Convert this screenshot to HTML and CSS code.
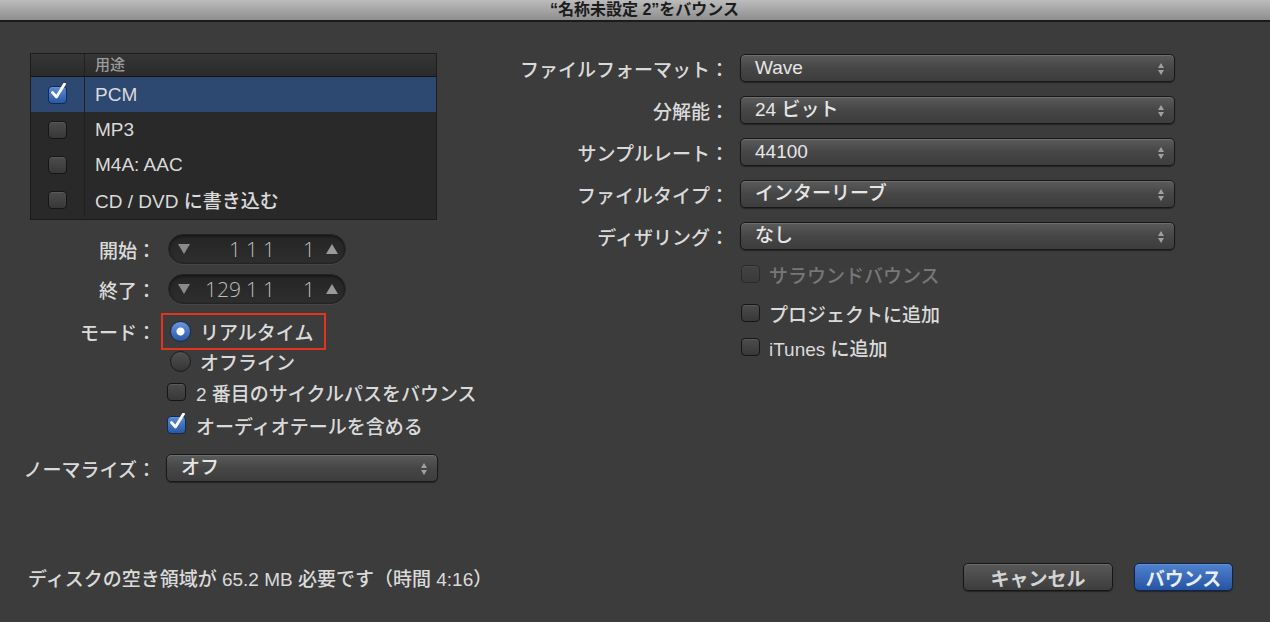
FILE: index.html
```html
<!DOCTYPE html>
<html lang="ja">

<head>
    <meta charset="UTF-8">
    <meta name="viewport" content="width=device-width, initial-scale=1.0">
    <title>“名称未設定 2”をバウンス</title>
    <link rel="stylesheet" href="styles.css">
</head>

<body>
    <div class="titlebar">“名称未設定 2”をバウンス</div>

    <div class="content">
        <div class="left-pane">
            <div class="format-list">
                <div class="list-header">
                    <div class="list-check"></div>
                    <div class="list-name">用途</div>
                </div>
                <div class="list-row selected">
                    <div class="list-check"><span class="checkbox checked"></span></div>
                    <div class="list-name">PCM</div>
                </div>
                <div class="list-row">
                    <div class="list-check"><span class="checkbox"></span></div>
                    <div class="list-name">MP3</div>
                </div>
                <div class="list-row">
                    <div class="list-check"><span class="checkbox"></span></div>
                    <div class="list-name">M4A: AAC</div>
                </div>
                <div class="list-row">
                    <div class="list-check"><span class="checkbox"></span></div>
                    <div class="list-name">CD / DVD に書き込む</div>
                </div>
            </div>

            <div class="form-row row-start">
                <div class="form-label">開始：</div>
                <div class="stepper">
                    <span class="tri-down"></span>
                    <span class="pos pos-bar">1</span>
                    <span class="pos pos-beat">1</span>
                    <span class="pos pos-div">1</span>
                    <span class="pos pos-tick">1</span>
                    <span class="tri-up"></span>
                </div>
            </div>

            <div class="form-row row-end">
                <div class="form-label">終了：</div>
                <div class="stepper">
                    <span class="tri-down"></span>
                    <span class="pos pos-bar">129</span>
                    <span class="pos pos-beat">1</span>
                    <span class="pos pos-div">1</span>
                    <span class="pos pos-tick">1</span>
                    <span class="tri-up"></span>
                </div>
            </div>

            <div class="form-row row-mode">
                <div class="form-label">モード：</div>
                <div class="highlight">
                    <span class="radio on"></span>
                    <span class="option-text">リアルタイム</span>
                </div>
            </div>

            <div class="form-row row-offline">
                <div class="form-label"></div>
                <span class="radio"></span>
                <span class="option-text">オフライン</span>
            </div>

            <div class="form-row row-check">
                <div class="form-label"></div>
                <span class="checkbox"></span>
                <span class="option-text">2 番目のサイクルパスをバウンス</span>
            </div>

            <div class="form-row row-check">
                <div class="form-label"></div>
                <span class="checkbox checked"></span>
                <span class="option-text">オーディオテールを含める</span>
            </div>

            <div class="form-row row-normalize">
                <div class="form-label">ノーマライズ：</div>
                <div class="select select-small">オフ<span class="arrows"></span></div>
            </div>
        </div>

        <div class="right-pane">
            <div class="field">
                <div class="field-label">ファイルフォーマット：</div>
                <div class="select">Wave<span class="arrows"></span></div>
            </div>
            <div class="field">
                <div class="field-label">分解能：</div>
                <div class="select">24 ビット<span class="arrows"></span></div>
            </div>
            <div class="field">
                <div class="field-label">サンプルレート：</div>
                <div class="select">44100<span class="arrows"></span></div>
            </div>
            <div class="field">
                <div class="field-label">ファイルタイプ：</div>
                <div class="select">インターリーブ<span class="arrows"></span></div>
            </div>
            <div class="field">
                <div class="field-label">ディザリング：</div>
                <div class="select">なし<span class="arrows"></span></div>
            </div>

            <div class="option disabled opt-surround">
                <span class="checkbox"></span>
                <span class="option-text">サラウンドバウンス</span>
            </div>
            <div class="option opt-project">
                <span class="checkbox"></span>
                <span class="option-text">プロジェクトに追加</span>
            </div>
            <div class="option opt-itunes">
                <span class="checkbox"></span>
                <span class="option-text">iTunes に追加</span>
            </div>
        </div>
    </div>

    <div class="footer">
        <div class="disk-info">ディスクの空き領域が 65.2 MB 必要です（時間 4:16）</div>
        <button type="button" class="btn">キャンセル</button>
        <button type="button" class="btn btn-primary">バウンス</button>
    </div>
</body>
</html>
```

FILE: styles.css
```css
body {
    font-family: "Liberation Sans", "Noto Sans CJK JP", sans-serif;
    background-color: #3c3c3c;
    color: #dadada;
    font-size: 19px;
    font-weight: 500;
    margin: 0;
    height: 100vh;
    display: flex;
    flex-direction: column;
    overflow: hidden;
}

/* window title */
.titlebar {
    height: 20px;
    line-height: 20px;
    text-align: center;
    padding-left: 19px;
    font-size: 16px;
    font-weight: bold;
    color: #1c1c1c;
    background: linear-gradient(#bcbcbc, #8e8e8e);
    border-bottom: 2px solid #1b1b1b;
}

.content {
    display: flex;
    padding-top: 31px;
}

/* left side */
.left-pane {
    width: 414px;
    padding-left: 24px;
}

.format-list {
    margin-left: 6px;
    width: 405px;
    height: 165px;
    background-color: #292929;
    border: 1px solid #1c1c1c;
}

.list-header {
    display: flex;
    height: 22px;
    background: linear-gradient(#363636, #2b2b2b);
    border-bottom: 1px solid #141414;
    font-size: 15px;
    color: #9c9c9c;
    line-height: 22px;
}

.list-row {
    display: flex;
    align-items: center;
    height: 35px;
}

.list-row.selected {
    background-color: #2d4971;
}

.list-check {
    width: 53px;
    height: 100%;
    border-right: 1px solid #202020;
    display: flex;
    align-items: center;
    justify-content: center;
}

.list-name {
    padding-left: 10px;
}

.form-row {
    display: flex;
    align-items: center;
    white-space: nowrap;
}

.form-label {
    width: 132px;
    margin-right: 10px;
    display: flex;
    justify-content: flex-end;
    flex-shrink: 0;
}

.row-start {
    margin-top: 14px;
    height: 30px;
}

.row-end {
    margin-top: 10px;
    height: 30px;
}

.row-mode {
    margin-top: 9px;
    height: 37px;
}

.row-offline {
    margin-top: 0;
    height: 22px;
}

.row-offline .radio {
    margin-left: 4px;
}

.row-check .checkbox {
    margin-left: 1px;
}

.row-check .option-text {
    margin-left: 10px;
}

.row-check {
    height: 26px;
    margin-top: 7px;
}

.row-normalize {
    margin-top: 16px;
    height: 28px;
}

.highlight {
    display: flex;
    align-items: center;
    box-sizing: border-box;
    height: 37px;
    width: 165px;
    margin-left: -5px;
    padding-left: 7px;
    border: 2px solid #e5341d;
}

.option-text {
    margin-left: 9px;
}

/* position stepper */
.stepper {
    position: relative;
    box-sizing: border-box;
    width: 178px;
    height: 30px;
    margin-left: 2px;
    border-radius: 15px;
    background: linear-gradient(#252525, #2e2e2e);
    border: 1px solid #232323;
    box-shadow: inset 0 1px 3px rgba(0, 0, 0, 0.6), 0 1px 0 rgba(255, 255, 255, 0.06);
    display: flex;
    align-items: center;
    color: #bdbdbd;
    font-size: 21px;
    font-family: "Open Sans", "Liberation Sans", sans-serif;
    font-weight: 300;
}

.tri-down,
.tri-up {
    width: 0;
    height: 0;
    border-left: 6px solid transparent;
    border-right: 6px solid transparent;
}

.tri-down {
    margin-left: 9px;
    border-top: 10px solid #8a8a8a;
}

.tri-up {
    margin-left: 11px;
    border-bottom: 10px solid #9a9a9a;
}

.pos {
    display: inline-block;
    text-align: right;
    line-height: 1;
}

.pos-bar {
    width: 51px;
}

.pos-beat {
    width: 17px;
}

.pos-div {
    width: 17px;
}

.pos-tick {
    width: 40px;
}

/* controls */
.checkbox {
    position: relative;
    display: inline-block;
    box-sizing: border-box;
    width: 19px;
    height: 18px;
    border-radius: 4px;
    background: linear-gradient(#4c4c4c, #383838);
    border: 1px solid #161616;
    box-shadow: inset 0 1px 0 rgba(255, 255, 255, 0.08);
    flex-shrink: 0;
}

.checkbox.checked {
    background: linear-gradient(#5a8ad6, #2a58a6);
    border-color: #14294d;
}

.checkbox.checked::after {
    content: "";
    position: absolute;
    left: 2px;
    top: -4px;
    width: 15px;
    height: 17px;
    background: url("data:image/svg+xml;utf8,<svg xmlns='http://www.w3.org/2000/svg' viewBox='0 0 15 17'><path d='M1.5 9.5 L5.5 14 L13.5 1' fill='none' stroke='white' stroke-width='2.8' stroke-linecap='round' stroke-linejoin='round'/></svg>") no-repeat;
}

.radio {
    display: inline-block;
    box-sizing: border-box;
    width: 21px;
    height: 21px;
    border-radius: 50%;
    background: linear-gradient(#505050, #353535);
    border: 1px solid #1a1a1a;
    flex-shrink: 0;
}

.radio.on {
    background: radial-gradient(circle, #ffffff 0 3.5px, transparent 4.5px), linear-gradient(#6a98dd, #2a58a4);
    border-color: #132a50;
}

.select {
    position: relative;
    box-sizing: border-box;
    width: 435px;
    height: 28px;
    line-height: 26px;
    padding-left: 14px;
    border-radius: 5px;
    border: 1px solid #181818;
    background: linear-gradient(#5b5b5b, #464646 50%, #3d3d3d);
    box-shadow: inset 0 1px 0 rgba(255, 255, 255, 0.12), 0 1px 1px rgba(0, 0, 0, 0.4);
    color: #e6e6e6;
}

.select-small {
    width: 272px;
}

.arrows {
    position: absolute;
    right: 9px;
    top: 8px;
    width: 7px;
    height: 12px;
}

.arrows::before,
.arrows::after {
    content: "";
    position: absolute;
    left: 0;
    border-left: 3.5px solid transparent;
    border-right: 3.5px solid transparent;
}

.arrows::before {
    top: 0;
    border-bottom: 5px solid #a0a0a0;
}

.arrows::after {
    bottom: 0;
    border-top: 5px solid #a0a0a0;
}

/* right side */
.right-pane {
    margin-left: 22px;
    margin-top: 1px;
    display: flex;
    flex-direction: column;
}

.field {
    display: flex;
    align-items: center;
    margin-bottom: 14px;
}

.field-label {
    width: 269px;
    margin-right: 11px;
    text-align: right;
}

.option {
    display: flex;
    align-items: center;
    margin-left: 281px;
    height: 20px;
    white-space: nowrap;
}

.opt-surround {
    margin-top: 0;
}

.opt-project {
    margin-top: 19px;
}

.opt-itunes {
    margin-top: 14px;
}

.option.disabled {
    color: #777777;
}

.option.disabled .checkbox {
    opacity: 0.45;
}

/* bottom bar */
.footer {
    margin-top: auto;
    display: flex;
    align-items: center;
    height: 28px;
    padding: 0 37px 31px 28px;
}

.disk-info {
    flex: 1;
}

.btn {
    font-family: inherit;
    font-size: 19px;
    font-weight: bold;
    color: #d4d4d4;
    width: 150px;
    height: 28px;
    border-radius: 5px;
    border: 1px solid #151515;
    background: linear-gradient(#585858, #3d3d3d);
    box-shadow: inset 0 1px 0 rgba(255, 255, 255, 0.12), 0 1px 1px rgba(0, 0, 0, 0.4);
    padding: 0;
}

.btn-primary {
    width: 99px;
    margin-left: 21px;
    color: #e8eefa;
    background: linear-gradient(#4f82cf, #2654a3);
    border-color: #10244a;
}
```
